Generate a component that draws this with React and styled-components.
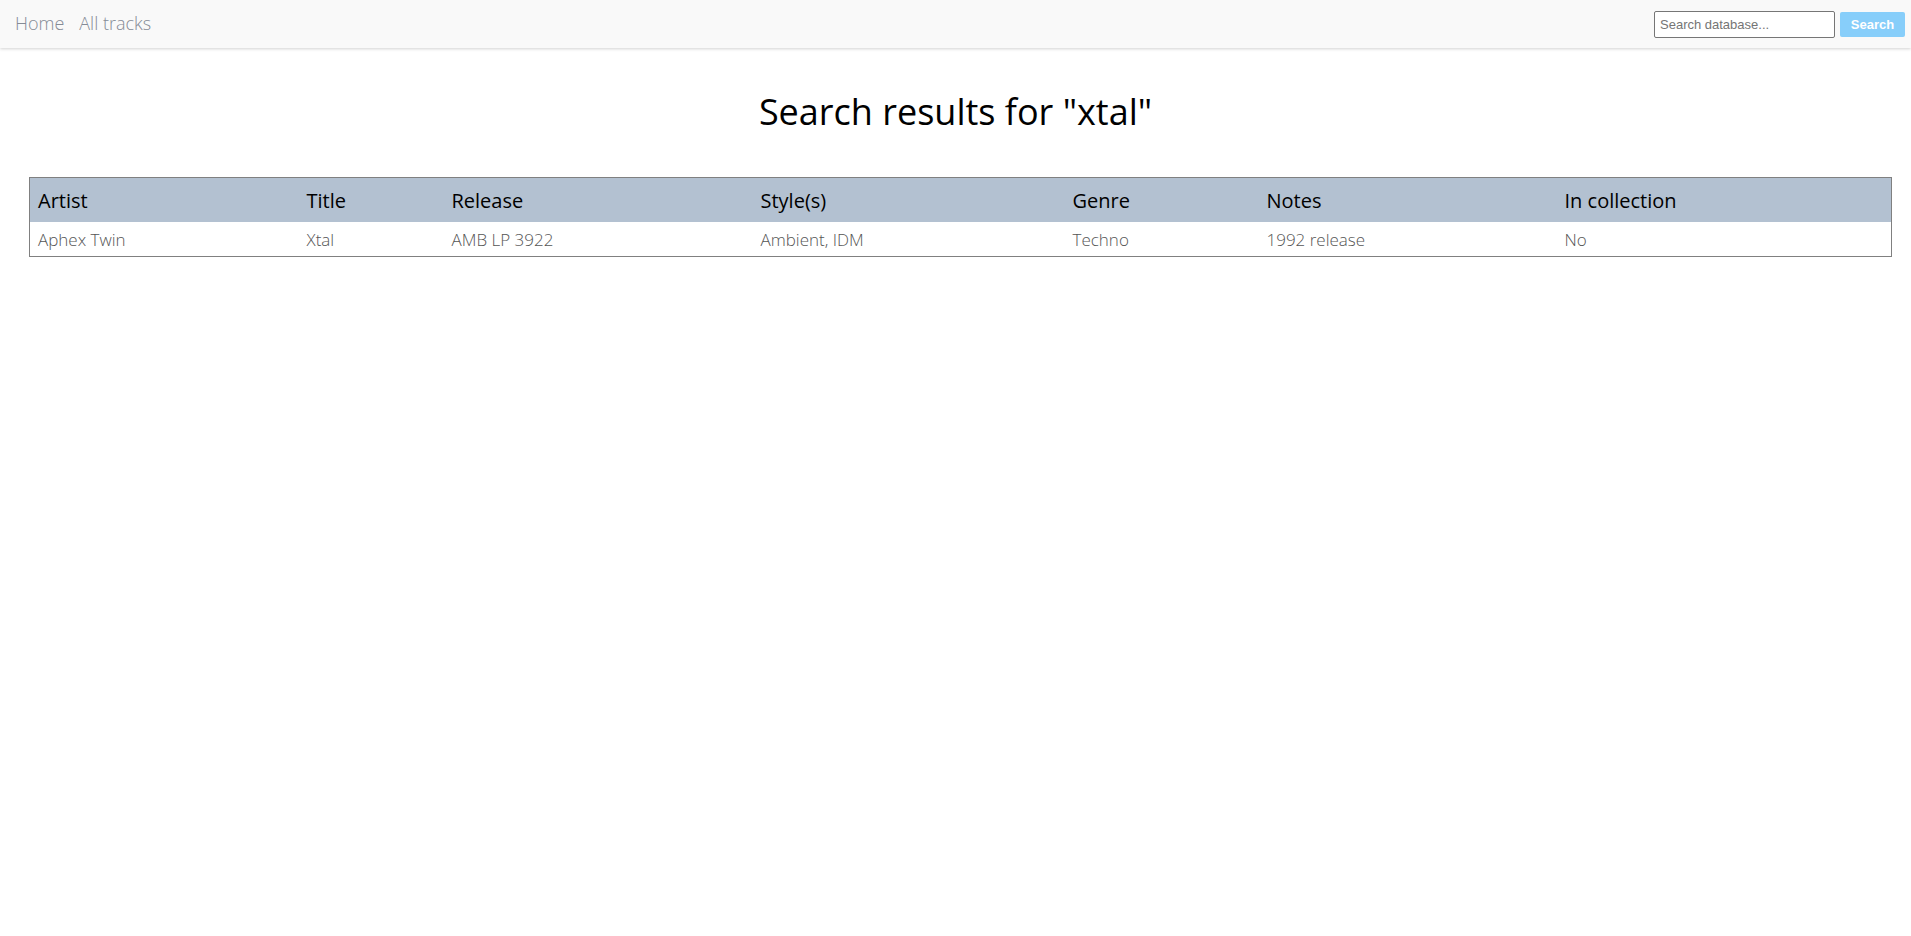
import React from 'react';
import styled, { createGlobalStyle } from 'styled-components';

const GlobalStyle = createGlobalStyle`
  body {
    margin: 0;
    background: #fff;
    font-family: "Open Sans", sans-serif;
  }
`;

const NavBar = styled.nav`
  display: flex;
  align-items: center;
  justify-content: space-between;
  height: 48px;
  padding: 0 6px 0 15px;
  background-color: #f9f9f9;
  box-shadow: 0 1px 3px rgba(0, 0, 0, 0.18);
  box-sizing: border-box;
`;

const NavLinks = styled.div`
  display: flex;
  gap: 15px;
  margin-top: -2px;
`;

const NavLink = styled.a`
  font-size: 18px;
  font-weight: 300;
  color: #858b96;
  text-decoration: none;
`;

const SearchForm = styled.form`
  display: flex;
  align-items: center;
  gap: 5px;
`;

const SearchInput = styled.input`
  width: 181px;
  height: 27px;
  box-sizing: border-box;
  border: 1px solid #767676;
  border-radius: 2px;
  padding: 1px 5px;
  font-family: "Liberation Sans", Arial, sans-serif;
  font-size: 13px;
  color: #222;

  &::placeholder {
    color: #757575;
  }
`;

const SearchButton = styled.button`
  width: 65px;
  height: 25px;
  border: none;
  border-radius: 2px;
  background-color: #87cefa;
  color: #fff;
  font-family: "Liberation Sans", Arial, sans-serif;
  font-size: 13px;
  font-weight: bold;
  cursor: pointer;
`;

const Heading = styled.h1`
  margin: 41px 0 41px;
  text-align: center;
  font-size: 36px;
  font-weight: 400;
  line-height: 1.3;
  color: #000;
`;

const ResultsTable = styled.table`
  width: 1862px;
  margin: 0 20px 0 29px;
  border-collapse: collapse;
  table-layout: fixed;
  border: 1px solid #808080;
`;

const HeadCell = styled.th`
  box-sizing: border-box;
  width: ${(p) => p.w}px;
  height: 45px;
  padding: 0 8px;
  text-align: left;
  font-size: 20px;
  font-weight: 400;
  color: #000;
  background-color: #b3c1d1;
`;

const Cell = styled.td`
  height: 34px;
  padding: 0 8px;
  font-size: 17px;
  font-weight: 300;
  color: #555;
`;

const columns = [
  { label: 'Artist', w: 269 },
  { label: 'Title', w: 145 },
  { label: 'Release', w: 309 },
  { label: 'Style(s)', w: 312 },
  { label: 'Genre', w: 194 },
  { label: 'Notes', w: 298 },
  { label: 'In collection', w: 335 },
];

const results = [
  ['Aphex Twin', 'Xtal', 'AMB LP 3922', 'Ambient, IDM', 'Techno', '1992 release', 'No'],
];

const App = () => {
  return (
    <>
      <GlobalStyle />
      <NavBar>
        <NavLinks>
          <NavLink href="#">Home</NavLink>
          <NavLink href="#">All tracks</NavLink>
        </NavLinks>
        <SearchForm onSubmit={(e) => e.preventDefault()}>
          <SearchInput placeholder="Search database..." />
          <SearchButton type="submit">Search</SearchButton>
        </SearchForm>
      </NavBar>
      <Heading>Search results for "xtal"</Heading>
      <ResultsTable>
        <thead>
          <tr>
            {columns.map((c) => (
              <HeadCell key={c.label} w={c.w}>{c.label}</HeadCell>
            ))}
          </tr>
        </thead>
        <tbody>
          {results.map((row, i) => (
            <tr key={i}>
              {row.map((v, j) => (
                <Cell key={j}>{v}</Cell>
              ))}
            </tr>
          ))}
        </tbody>
      </ResultsTable>
    </>
  );
};

export default App;
